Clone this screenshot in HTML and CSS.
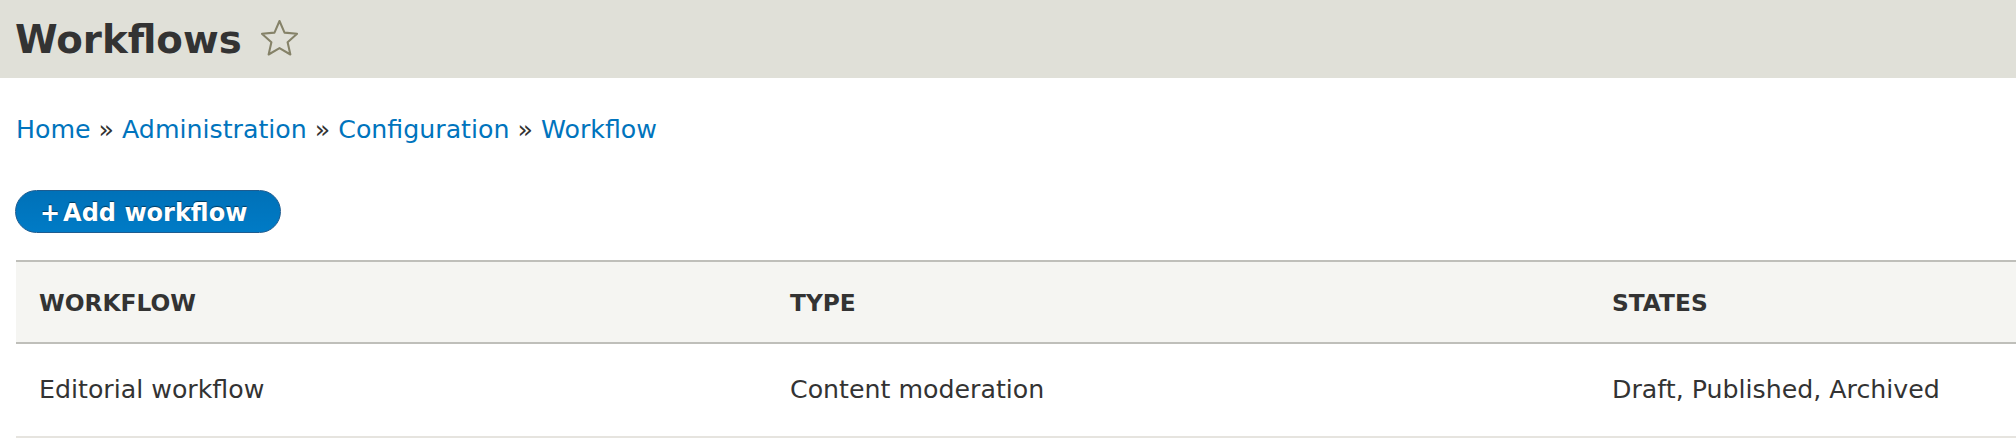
FILE: index.html
```html
<!DOCTYPE html>
<html lang="en">
<head>
<meta charset="utf-8">
<title>Workflows</title>
<link rel="stylesheet" href="styles.css">
</head>
<body>
<header class="page-header">
  <h1 class="page-title">Workflows
    <svg class="star" width="37" height="37" viewBox="-1 0 36 36" aria-hidden="true">
      <polygon points="17,1 21.88,12.29 34.12,13.44 24.89,21.56 27.58,33.56 17,27.3 6.42,33.56 9.11,21.56 -0.12,13.44 12.12,12.29" fill="none" stroke="#858268" stroke-width="2" stroke-linejoin="round"/>
    </svg>
  </h1>
</header>
<main class="content">
  <nav class="breadcrumb">
    <a href="#">Home</a><span class="sep">»</span><a href="#">Administration</a><span class="sep">»</span><a href="#">Configuration</a><span class="sep">»</span><a href="#">Workflow</a>
  </nav>
  <div class="actions">
    <a class="button-primary" href="#"><span class="plus">+</span>Add workflow</a>
  </div>
  <table class="listing">
    <thead>
      <tr>
        <th class="col-name">Workflow</th>
        <th class="col-type">Type</th>
        <th class="col-states">States</th>
      </tr>
    </thead>
    <tbody>
      <tr>
        <td>Editorial workflow</td>
        <td>Content moderation</td>
        <td>Draft, Published, Archived</td>
      </tr>
    </tbody>
  </table>
</main>
</body>
</html>
```
FILE: styles.css
```css
html, body {
  margin: 0;
  padding: 0;
  background: #ffffff;
}
body {
  font-family: "DejaVu Sans", Verdana, sans-serif;
  color: #333333;
}
.page-header {
  background: #e0e0d8;
  padding: 18px 16px 16px 15px;
}
.page-title {
  margin: 0;
  display: flex;
  align-items: center;
  font-size: 38.7px;
  line-height: 44px;
  font-weight: bold;
  color: #333333;
}
.star {
  margin-left: 19px;
  margin-bottom: 4px;
  flex: none;
}
.content {
  padding: 0 0 0 16px;
}
.breadcrumb {
  margin-top: 37px;
  font-size: 25.25px;
  line-height: 30px;
  color: #333333;
}
.breadcrumb a {
  color: #0074bd;
  text-decoration: none;
}
.breadcrumb .sep {
  padding: 0 8px;
}
.actions {
  margin-top: 45px;
  display: flex;
}
.button-primary {
  margin-left: -1px;
  display: inline-block;
  box-sizing: border-box;
  height: 43px;
  padding: 9px 33px 0 24px;
  font-size: 24px;
  line-height: 26px;
  font-weight: bold;
  color: #ffffff;
  text-decoration: none;
  background: linear-gradient(to top, #007bc6, #0071b8);
  border: 1px solid #1e5c90;
  border-radius: 22px;
  text-shadow: 0 -1px 1px rgba(0, 0, 0, 0.5);
}
.plus {
  margin-right: 3px;
}
.listing {
  margin-top: 27px;
  width: 100%;
  border-collapse: separate;
  border-spacing: 0;
}
.listing th {
  text-align: left;
  text-transform: uppercase;
  font-size: 23.3px;
  line-height: 28px;
  font-weight: bold;
  color: #333333;
  background: #f5f5f2;
  padding: 27px 22px 25px 23px;
  border-top: 2px solid #bfbfba;
  border-bottom: 2px solid #bfbfba;
}
.listing td {
  font-size: 25.25px;
  line-height: 30px;
  padding: 31px 22px 31px 23px;
  border-bottom: 2px solid #e6e4df;
  color: #333333;
}
.col-name { width: 706px; }
.col-type { width: 777px; }
```
